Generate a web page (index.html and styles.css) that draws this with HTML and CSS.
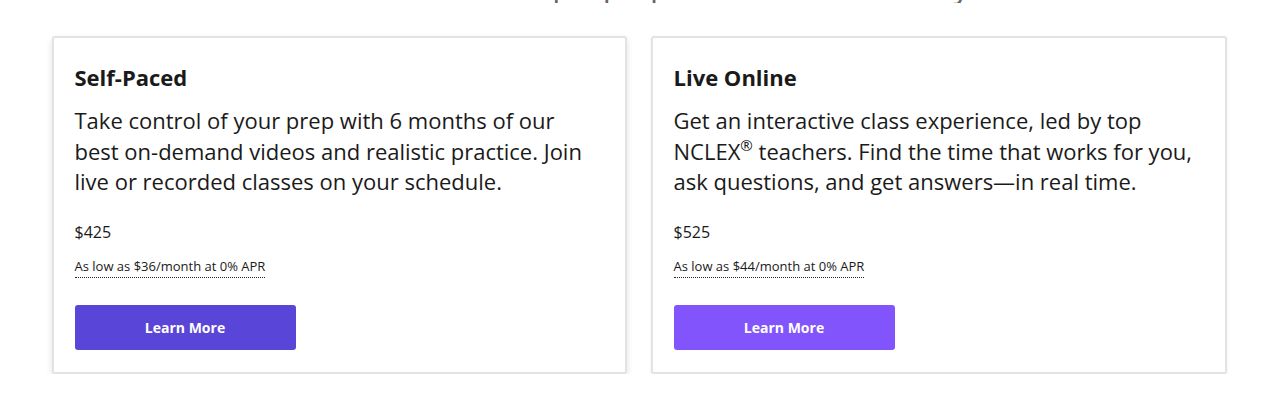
FILE: index.html
```html
<!DOCTYPE html>
<html lang="en">
<head>
<meta charset="utf-8">
<title>NCLEX prep options</title>
<link rel="stylesheet" href="styles.css">
</head>
<body>
<section class="plans">
  <h2 class="plans-title">Choose the NCLEX prep option that works for you</h2>
  <div class="cards">
    <article class="card card-active">
      <h3 class="card-title">Self-Paced</h3>
      <p class="card-desc">Take control of your prep with 6 months of our best on-demand videos and realistic practice. Join live or recorded classes on your schedule.</p>
      <p class="card-price">$425</p>
      <p class="card-finance"><span class="finance-link">As low as $36/month at 0% APR</span></p>
      <a class="btn btn-dark" href="#">Learn More</a>
    </article>
    <article class="card">
      <h3 class="card-title">Live Online</h3>
      <p class="card-desc">Get an interactive class experience, led by top NCLEX<sup>®</sup> teachers. Find the time that works for you, ask questions, and get answers—in real time.</p>
      <p class="card-price">$525</p>
      <p class="card-finance"><span class="finance-link">As low as $44/month at 0% APR</span></p>
      <a class="btn btn-light" href="#">Learn More</a>
    </article>
  </div>
</section>
</body>
</html>
```
FILE: styles.css
```css
* { box-sizing: border-box; }
html, body { margin: 0; padding: 0; background: #fff; }
body {
  font-family: "Open Sans", "Noto Sans", sans-serif;
  color: #1a1a1a;
  overflow: hidden;
  padding-top: 1px;
}
.plans {
  width: 1175px;
  margin: 0 auto;
  position: relative;
  left: 2px;
}
.plans-title {
  margin: -36px 0 0;
  height: 38px;
  overflow: hidden;
  font-size: 32px;
  line-height: 40px;
  font-weight: 400;
  color: #666;
  text-align: center;
}
.cards {
  display: grid;
  grid-template-columns: 575px 576px;
  gap: 24px;
  margin-top: 33px;
}
.card {
  border: 2px solid #e3e3e3;
  border-radius: 3px;
  background: #fff;
  padding: 24px 21px 22px 21px;
  box-shadow: 0 1px 3px rgba(0,0,0,0.08);
  display: flex;
  flex-direction: column;
  align-items: flex-start;
  height: 338px;
}
.card-active {
  box-shadow: 0 3px 6px rgba(0,0,0,0.12);
}
.card-title {
  margin: 0;
  font-size: 22px;
  line-height: 30px;
  font-weight: 700;
}
.card-desc {
  margin: 13px 0 0;
  font-size: 22px;
  line-height: 30.5px;
}
.card-desc sup {
  font-size: 15px;
  line-height: 0;
  vertical-align: 9px;
}
.card-price {
  margin: 24px 0 0;
  font-size: 16px;
  line-height: 22px;
}
.card-finance {
  margin: 13px 0 0;
  font-size: 13px;
  line-height: 20px;
}
.finance-link {
  border-bottom: 1px dotted #222;
  padding-bottom: 2px;
}
.btn {
  margin-top: 29px;
  display: flex;
  align-items: center;
  justify-content: center;
  width: 221px;
  height: 45px;
  border-radius: 3px;
  color: #fff;
  font-size: 14px;
  font-weight: 700;
  text-decoration: none;
}
.btn-dark { background: #5945d7; }
.btn-light { background: #8254fb; }
```
